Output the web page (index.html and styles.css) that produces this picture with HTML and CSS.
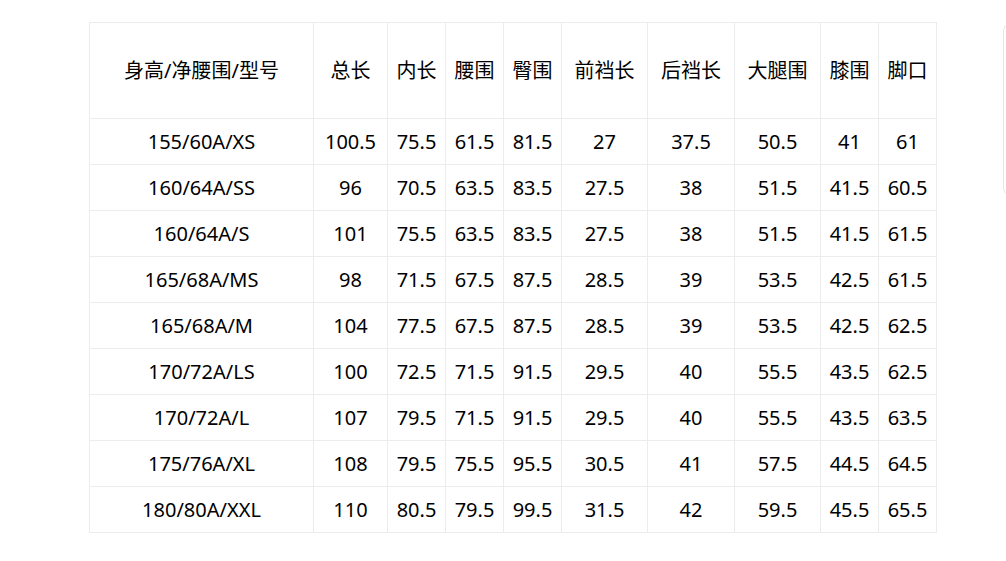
FILE: index.html
```html
<!DOCTYPE html>
<html lang="zh-CN">
<head>
<meta charset="utf-8">
<title>尺码表</title>
<link rel="stylesheet" href="styles.css">
</head>
<body>
<div class="page">
  <table class="size-table">
    <colgroup>
      <col class="c-size">
      <col class="c-74">
      <col class="c-58">
      <col class="c-58">
      <col class="c-58">
      <col class="c-86">
      <col class="c-87">
      <col class="c-86">
      <col class="c-58">
      <col class="c-58">
    </colgroup>
    <thead>
      <tr class="head-row">
        <th>身高/净腰围/型号</th><th>总长</th><th>内长</th><th>腰围</th><th>臀围</th><th>前裆长</th><th>后裆长</th><th>大腿围</th><th>膝围</th><th>脚口</th>
      </tr>
    </thead>
    <tbody>
      <tr><td>155/60A/XS</td><td>100.5</td><td>75.5</td><td>61.5</td><td>81.5</td><td>27</td><td>37.5</td><td>50.5</td><td>41</td><td>61</td></tr>
      <tr><td>160/64A/SS</td><td>96</td><td>70.5</td><td>63.5</td><td>83.5</td><td>27.5</td><td>38</td><td>51.5</td><td>41.5</td><td>60.5</td></tr>
      <tr><td>160/64A/S</td><td>101</td><td>75.5</td><td>63.5</td><td>83.5</td><td>27.5</td><td>38</td><td>51.5</td><td>41.5</td><td>61.5</td></tr>
      <tr><td>165/68A/MS</td><td>98</td><td>71.5</td><td>67.5</td><td>87.5</td><td>28.5</td><td>39</td><td>53.5</td><td>42.5</td><td>61.5</td></tr>
      <tr><td>165/68A/M</td><td>104</td><td>77.5</td><td>67.5</td><td>87.5</td><td>28.5</td><td>39</td><td>53.5</td><td>42.5</td><td>62.5</td></tr>
      <tr><td>170/72A/LS</td><td>100</td><td>72.5</td><td>71.5</td><td>91.5</td><td>29.5</td><td>40</td><td>55.5</td><td>43.5</td><td>62.5</td></tr>
      <tr><td>170/72A/L</td><td>107</td><td>79.5</td><td>71.5</td><td>91.5</td><td>29.5</td><td>40</td><td>55.5</td><td>43.5</td><td>63.5</td></tr>
      <tr><td>175/76A/XL</td><td>108</td><td>79.5</td><td>75.5</td><td>95.5</td><td>30.5</td><td>41</td><td>57.5</td><td>44.5</td><td>64.5</td></tr>
      <tr><td>180/80A/XXL</td><td>110</td><td>80.5</td><td>79.5</td><td>99.5</td><td>31.5</td><td>42</td><td>59.5</td><td>45.5</td><td>65.5</td></tr>
    </tbody>
  </table>
  <div class="side-panel"></div>
</div>
</body>
</html>
```
FILE: styles.css
```css
html, body {
  margin: 0;
  padding: 0;
  background: #fff;
}
.page {
  position: relative;
  width: 1006px;
  height: 561px;
  overflow: hidden;
  padding: 22px 0 0 89px;
  box-sizing: border-box;
  font-family: "Noto Sans", "Noto Sans CJK SC", sans-serif;
  color: #000;
}
.size-table {
  border-collapse: collapse;
  table-layout: fixed;
  width: 848px;
  font-size: 20px;
}
.c-size { width: 224px; }
.c-74 { width: 74px; }
.c-58 { width: 58px; }
.c-86 { width: 86px; }
.c-87 { width: 87px; }
.size-table th,
.size-table td {
  border: 1px solid #ececec;
  padding: 0;
  text-align: center;
  vertical-align: middle;
  font-weight: normal;
  white-space: nowrap;
  line-height: 24px;
}
.size-table tbody tr {
  height: 46px;
}
.head-row {
  height: 96px;
}
.side-panel {
  position: absolute;
  left: 1003px;
  top: 23px;
  width: 40px;
  height: 173px;
  border: 1px solid #e6e6e6;
  border-radius: 8px;
  box-sizing: border-box;
}
```
